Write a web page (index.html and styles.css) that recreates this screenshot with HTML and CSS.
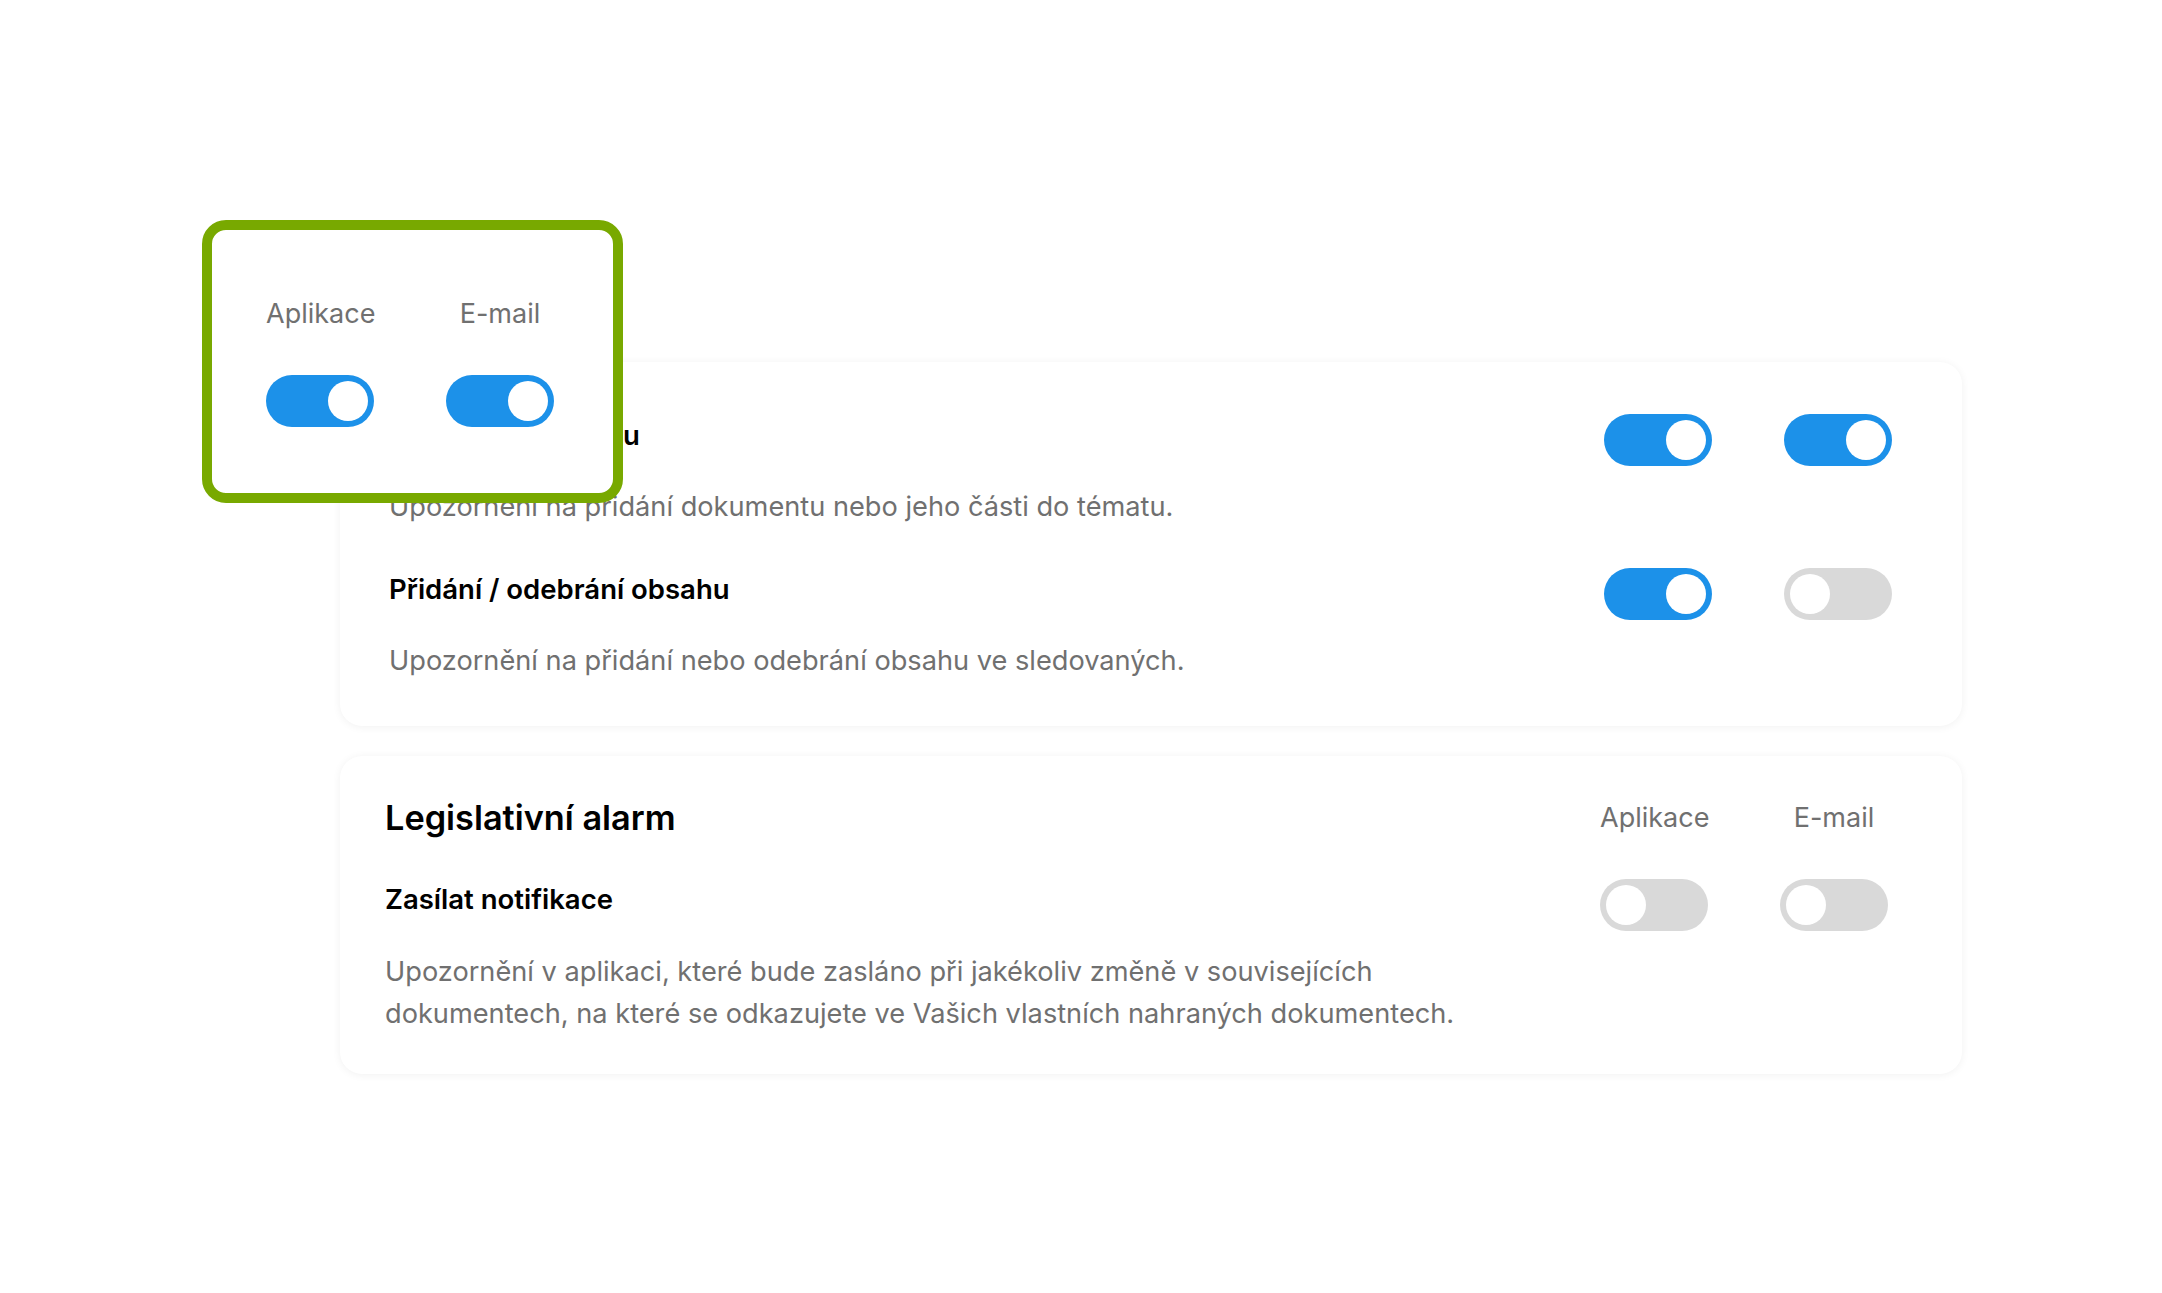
FILE: index.html
```html
<!DOCTYPE html>
<html>
<head>
	<meta charset="utf-8">
	<title>Notifikace</title>
	<link rel="stylesheet" href="styles.css">
</head>

<body>

	<div class="page">

		<div class="card card-topics">
			<div class="row">
				<div class="text">
					<div class="title">Přidání dokumentu</div>
					<div class="desc">Upozornění na přidání dokumentu nebo jeho části do tématu.</div>
				</div>
				<div class="switches">
					<span class="toggle on"><span class="knob"></span></span>
					<span class="toggle on"><span class="knob"></span></span>
				</div>
			</div>
			<div class="row">
				<div class="text">
					<div class="title">Přidání / odebrání obsahu</div>
					<div class="desc">Upozornění na přidání nebo odebrání obsahu ve sledovaných.</div>
				</div>
				<div class="switches">
					<span class="toggle on"><span class="knob"></span></span>
					<span class="toggle"><span class="knob"></span></span>
				</div>
			</div>
		</div>

		<div class="card card-alarm">
			<div class="head">
				<h2>Legislativní alarm</h2>
				<div class="labels">
					<span>Aplikace</span>
					<span>E-mail</span>
				</div>
			</div>
			<div class="row">
				<div class="text">
					<div class="title">Zasílat notifikace</div>
					<div class="desc">Upozornění v aplikaci, které bude zasláno při jakékoliv změně v souvisejících dokumentech, na které se odkazujete ve Vašich vlastních nahraných dokumentech.</div>
				</div>
				<div class="switches">
					<span class="toggle"><span class="knob"></span></span>
					<span class="toggle"><span class="knob"></span></span>
				</div>
			</div>
		</div>

		<!-- highlighted header, overlaid on the first card -->
		<div class="highlight">
			<div class="labels">
				<span>Aplikace</span>
				<span>E-mail</span>
			</div>
			<div class="switches">
				<span class="toggle on"><span class="knob"></span></span>
				<span class="toggle on"><span class="knob"></span></span>
			</div>
		</div>

	</div>

</body>
</html>
```

FILE: styles.css
```css
body, html {
	height: 100%;
	min-height: 100%;
}

body {
	margin: 0;
	padding: 0;
	background: #fff;
	font-family: Inter, "Noto Sans", sans-serif;
	color: #000;
}

.page {
	position: relative;
	padding: 362px 0 0 340px;
}

.card {
	box-sizing: border-box;
	width: 1622px;
	background: #fff;
	border-radius: 22px;
	box-shadow: 0 1px 8px rgba(0, 0, 0, 0.06);
}

.card + .card {
	margin-top: 30px;
}

.card-topics {
	padding: 57px 70px 44px 49px;
}

.card-alarm {
	padding: 42px 74px 39px 45px;
}

.row {
	display: flex;
	align-items: flex-start;
	justify-content: space-between;
}

.card-topics .row + .row {
	margin-top: 45px;
}

.text {
	max-width: 1100px;
}

.title {
	font-size: 27.5px;
	font-weight: 600;
	line-height: 32px;
}

.desc {
	font-size: 27.2px;
	line-height: 42px;
	color: #707070;
	margin-top: 35px;
}

.card-alarm .desc {
	margin-top: 36px;
}

.head {
	display: flex;
	align-items: center;
	justify-content: space-between;
	margin-bottom: 45px;
}

h2 {
	margin: 0;
	font-size: 34.3px;
	font-weight: 600;
	line-height: 40px;
}

.labels, .switches {
	display: flex;
	gap: 72px;
}

.labels span {
	width: 108px;
	text-align: center;
	font-size: 27px;
	line-height: 32px;
	color: #707070;
}

.card .switches {
	margin-top: -5px;
}

.card-alarm .switches {
	margin-top: -4px;
}

/* toggle switch */
.toggle {
	box-sizing: border-box;
	display: flex;
	justify-content: flex-start;
	width: 108px;
	height: 52px;
	padding: 6px;
	border-radius: 26px;
	background: #d9d9d9;
}

.toggle.on {
	justify-content: flex-end;
	background: #1c91e9;
}

.knob {
	width: 40px;
	height: 40px;
	border-radius: 50%;
	background: #fff;
}

/* green callout */
.highlight {
	position: absolute;
	left: 202px;
	top: 220px;
	box-sizing: border-box;
	width: 421px;
	height: 283px;
	padding: 68px 0 0 54px;
	border: 10px solid #78a900;
	border-radius: 24px;
	background: #fff;
}

.highlight .switches {
	margin-top: 45px;
}
```
